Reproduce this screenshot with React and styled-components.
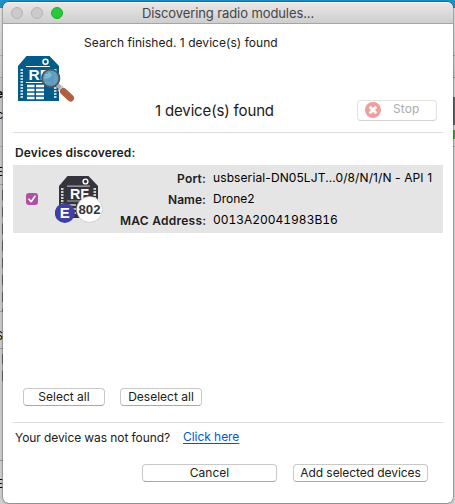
import React from 'react';
import styled, { createGlobalStyle } from 'styled-components';

const GlobalStyle = createGlobalStyle`
  * { box-sizing: border-box; }
  body {
    margin: 0;
    overflow: hidden;
    background: #d9d9d9;
    font-family: Inter, "Liberation Sans", sans-serif;
    font-size: 12px;
    color: #202020;
  }
`;

const Desktop = styled.div`
  position: relative;
  display: flex;
  justify-content: space-between;
  width: 455px;
  height: 504px;
  overflow: hidden;
  background: linear-gradient(#238fc3 0 8px, #e6e6e6 8px, #cfcfcf 76px, #d9d9d9 77px);
`;

const LeftEdge = styled.div`
  display: flex;
  flex-direction: column;
  width: 10px;
  padding-top: 55px;
  background: linear-gradient(transparent 77px, #b0b0b0 77px 78px, #c9c9c9 78px, #d4d4d4 100%);
`;

const RightEdge = styled.div`
  display: flex;
  flex-direction: column;
  align-items: flex-end;
  width: 5px;
  padding-top: 55px;
`;

const Sliver = styled.div`
  flex: none;
  width: 3px;
  height: ${(p) => p.$height}px;
  background: ${(p) => p.$fill || 'transparent'};
`;

const DashedEdge = styled.div`
  flex: none;
  width: 1px;
  height: ${(p) => p.$height}px;
  margin-left: 2px;
  background: repeating-linear-gradient(transparent 0 4px, #777 6px 14px, transparent 16px 17px);
`;

const HiddenLabel = styled.div`
  flex: none;
  width: 3px;
  height: ${(p) => p.$height}px;
  overflow: hidden;
  display: flex;
  justify-content: flex-end;
  line-height: 14px;
  font-weight: ${(p) => (p.$bold ? 700 : 400)};
  color: #000;
`;

const Window = styled.main`
  position: absolute;
  top: 2px;
  left: 3px;
  width: 450px;
  height: 501px;
  display: flex;
  flex-direction: column;
  overflow: hidden;
  border-radius: 6px;
  background: #fff;
  box-shadow: 0 0 0 0.5px rgba(0, 0, 0, 0.35), 0 1px 4px rgba(0, 0, 0, 0.3);
`;

const TitleBar = styled.header`
  display: grid;
  grid-template-columns: 86px 1fr 86px;
  align-items: center;
  flex: none;
  height: 22px;
  border-top: 1px solid #f2f2f2;
  border-bottom: 1px solid #a5a5a5;
  background: linear-gradient(#e7e7e7, #cecece);
`;

const Lights = styled.div`
  display: flex;
  gap: 8px;
  padding-left: 8px;
`;

const Light = styled.span`
  width: 12px;
  height: 12px;
  border-radius: 50%;
  border: 1px solid ${(p) => (p.$on ? '#1eae2b' : '#b3b3b3')};
  background: ${(p) => (p.$on ? '#27c83a' : '#cbcbcb')};
`;

const Title = styled.h1`
  margin: 0;
  text-align: center;
  font-size: 13px;
  font-weight: 400;
  line-height: 20px;
  letter-spacing: -0.1px;
  white-space: nowrap;
  color: #454545;
`;

const Body = styled.div`
  display: flex;
  flex-direction: column;
  flex: 1;
  padding: 0 10px;
`;

const Summary = styled.section`
  display: grid;
  grid-template-columns: 71px 1fr;
  height: 109px;
  border-bottom: 1px solid #dcdcdc;
`;

const SummaryIcon = styled.div`
  padding: 31px 0 0 3px;
`;

const Status = styled.p`
  margin: 10px 0 0;
  line-height: 18px;
  letter-spacing: 0.04px;
`;

const CountRow = styled.div`
  display: flex;
  align-items: center;
  justify-content: space-between;
  margin-top: 47px;
  padding: 0 6px 0 71px;
`;

const Count = styled.strong`
  font-size: 15px;
  font-weight: 400;
  line-height: 20px;
  letter-spacing: -0.15px;
  padding-top: 2px;
`;

const Button = styled.button`
  display: flex;
  align-items: center;
  justify-content: center;
  width: ${(p) => p.$width}px;
  height: 18px;
  padding: 0;
  border: 1px solid #c9c9c9;
  border-bottom-color: #a8a8a8;
  border-radius: 4px;
  background: #fff;
  font: inherit;
  line-height: 16px;
  letter-spacing: ${(p) => p.$tracking || 0}px;
  white-space: nowrap;
  color: #202020;
`;

const StopButton = styled(Button)`
  justify-content: flex-start;
  height: 21px;
  padding-left: 7px;
  gap: 12px;
  border-color: #e2e2e2;
  border-bottom-color: #d2d2d2;
  line-height: 17px;
  color: #adadad;

  span { padding-bottom: 3px; }
`;

const Devices = styled.section`
  display: flex;
  flex-direction: column;
  height: 290px;
  border-bottom: 1px solid #dcdcdc;
`;

const SectionTitle = styled.h2`
  margin: 11px 0 3px 2px;
  font-size: 12px;
  font-weight: 600;
  line-height: 18px;
  letter-spacing: 0.15px;
`;

const DeviceRow = styled.article`
  display: grid;
  grid-template-columns: 42px 65px 1fr;
  height: 68px;
  background: #e5e5e5;
`;

const Checkbox = styled.span`
  display: flex;
  width: 12px;
  height: 12px;
  margin: 28px 0 0 13px;
  border-radius: 3px;
  background: #b04fa6;
`;

const DeviceIcon = styled.div`
  padding-top: 10px;
`;

const Facts = styled.dl`
  display: grid;
  grid-template-columns: 86px 1fr;
  grid-auto-rows: 21px;
  column-gap: 7px;
  margin: 3px 0 0;
`;

const FactName = styled.dt`
  font-weight: 600;
  line-height: 21px;
  text-align: right;
  letter-spacing: ${(p) => p.$tracking}px;
  white-space: nowrap;
`;

const FactValue = styled.dd`
  margin: 0;
  line-height: 19px;
  font-variant-numeric: ${(p) => (p.$tabular ? 'tabular-nums' : 'normal')};
  letter-spacing: ${(p) => p.$tracking}px;
  white-space: nowrap;
  color: #000;
`;

const SelectionActions = styled.div`
  display: flex;
  gap: 15px;
  margin: auto 0 16px 10px;
`;

const Help = styled.p`
  display: flex;
  gap: 13px;
  margin: 5px 0 0 2px;
  line-height: 20px;
  letter-spacing: -0.085px;
`;

const HelpLink = styled.a`
  line-height: 18px;
  letter-spacing: -0.05px;
  color: #0058d0;
  text-decoration: underline;
  text-underline-offset: 2px;
`;

const Actions = styled.footer`
  display: flex;
  justify-content: flex-end;
  gap: 16px;
  margin: 16px 15px 0 0;
`;

function RadioSearchIcon() {
  const pins = [15, 18, 21, 24, 27, 30, 33, 36, 39, 42];
  return (
    <svg width="60" height="48" viewBox="0 0 60 48" display="block">
      <path d="M10.5 1h23L43 11v35H2V11z" fill="#035c87" />
      <path d="M10 11.500h24M10 27.500h25" stroke="#fff" strokeWidth="1" />
      <circle cx="29.500" cy="6.700" r="2.500" fill="none" stroke="#fff" strokeWidth="1.500" />
      {pins.map((y) => (
        <path key={y} d={`M4.500 ${y}h2.500M38 ${y}h2.500`} stroke="#fff" strokeWidth="1.600" />
      ))}
      {[31, 35, 39, 43].map((y) => (
        <path key={y} d={`M11 ${y}h7.500M20 ${y}h8`} stroke="#fff" strokeWidth="2.300" />
      ))}
      <text x="12.500" y="24.600" fontSize="15.500" fontWeight="700" fontFamily="Liberation Sans, sans-serif" fill="#fff">RF</text>
      <path d="M40.500 29l5 5" stroke="#a9adb0" strokeWidth="4" />
      <path d="M47.500 36.500l7 6.500" stroke="#ae6040" strokeWidth="7" strokeLinecap="round" />
      <path d="M42 36l5-5" stroke="#c8c8c8" strokeWidth="1.500" />
      <circle cx="34.700" cy="23.300" r="8.700" fill="#60a1c3" fillOpacity=".94" stroke="#54575b" strokeWidth="1.900" />
      <path d="M29 20h3l2-2.500M28.500 23q6-1 7-4" fill="none" stroke="#8bbbd3" strokeWidth="1.800" />
    </svg>
  );
}

function RadioModuleIcon() {
  return (
    <svg width="50" height="50" viewBox="0 0 50 50" display="block">
      <path d="M12.500 1h21L43 11v32H4V11z" fill="#35343d" />
      <path d="M12 11.200h23M12 26h24" stroke="#aaa9af" strokeWidth="1.200" />
      <circle cx="30.500" cy="6.500" r="2.400" fill="#35343d" stroke="#fff" strokeWidth="1.400" />
      {[14, 17, 20, 23, 26, 29].map((y) => (
        <path key={y} d={`M6 ${y}h2.500M38.500 ${y}h2.500`} stroke="#fff" strokeWidth="1.500" />
      ))}
      <path d="M13 30h8M13 34h8M13 38h8" stroke="#d5d5d8" strokeWidth="1.600" />
      <text x="15" y="23.500" fontSize="15" fontWeight="700" textLength="19" lengthAdjust="spacingAndGlyphs" fontFamily="Liberation Sans, sans-serif" fill="#fff">RF</text>
      <circle cx="9.800" cy="38" r="10" fill="#403fa3" />
      <text x="9.800" y="43.200" textAnchor="middle" fontSize="15" fontWeight="700" fontFamily="Liberation Sans, sans-serif" fill="#fff">E</text>
      <circle cx="34.500" cy="34.500" r="12.900" fill="#fff" stroke="#b9b9b9" strokeWidth=".6" />
      <text x="23.500" y="38.800" textLength="22" lengthAdjust="spacingAndGlyphs" fontSize="13" fontWeight="700" fontFamily="Liberation Sans, sans-serif" fill="#35343d">802</text>
    </svg>
  );
}

function StopIcon() {
  return (
    <svg width="16" height="16" viewBox="0 0 16 16">
      <circle cx="8" cy="8" r="8" fill="#ef9d9d" />
      <path d="M4.700 4.700l6.600 6.600M11.300 4.700l-6.600 6.600" stroke="#fff" strokeWidth="2.700" />
    </svg>
  );
}

function Backdrop() {
  return (
    <>
      <LeftEdge aria-hidden="true">
        <Sliver $height={1} $fill="#b5b5b5" />
        <Sliver $height={31} />
        <HiddenLabel $height={21} $bold>e</HiddenLabel>
        <HiddenLabel $height={38}>c</HiddenLabel>
        <Sliver $height={1} $fill="#b0b0b0" />
        <Sliver $height={18} />
        <HiddenLabel $height={19}>E</HiddenLabel>
        <Sliver $height={1} $fill="#a0a0a0" />
        <DashedEdge $height={126} />
        <Sliver $height={1} $fill="#a0a0a0" />
        <Sliver $height={17} />
        <HiddenLabel $height={19}>S</HiddenLabel>
        <Sliver $height={1} $fill="#a0a0a0" />
        <DashedEdge $height={34} />
        <Sliver $height={77} />
        <Sliver $height={1} $fill="#a0a0a0" />
        <Sliver $height={16} />
        <HiddenLabel $height={20}>E</HiddenLabel>
      </LeftEdge>
      <RightEdge aria-hidden="true">
        <Sliver $height={1} $fill="#aaa" />
        <Sliver $height={21} />
        <Sliver $height={1} $fill="#999" />
        <Sliver $height={19} />
        <Sliver $height={28} $fill="#68686c" />
        <Sliver $height={5} />
        <Sliver $height={9} $fill="#59a63d" />
        <Sliver $height={7} />
        <Sliver $height={1} $fill="#aaa" />
      </RightEdge>
    </>
  );
}

export default function App() {
  return (
    <Desktop>
      <GlobalStyle />
      <Backdrop />
      <Window>
        <TitleBar>
          <Lights>
            <Light />
            <Light />
            <Light $on />
          </Lights>
          <Title>Discovering radio modules...</Title>
        </TitleBar>
        <Body>
          <Summary>
            <SummaryIcon><RadioSearchIcon /></SummaryIcon>
            <div>
              <Status>Search finished. 1 device(s) found</Status>
              <CountRow>
                <Count>1 device(s) found</Count>
                <StopButton $width={80} $tracking={0.1} disabled>
                  <StopIcon />
                  <span>Stop</span>
                </StopButton>
              </CountRow>
            </div>
          </Summary>
          <Devices>
            <SectionTitle>Devices discovered:</SectionTitle>
            <DeviceRow>
              <Checkbox>
                <svg width="12" height="12" viewBox="0 0 12 12">
                  <path d="M3 6.200l2.200 2.500L9 3.200" fill="none" stroke="#fff" strokeWidth="1.600" strokeLinecap="round" strokeLinejoin="round" />
                </svg>
              </Checkbox>
              <DeviceIcon><RadioModuleIcon /></DeviceIcon>
              <Facts>
                <FactName $tracking={0.18}>Port:</FactName>
                <FactValue $tracking={0.1}>usbserial-DN05LJT...0/8/N/1/N - API 1</FactValue>
                <FactName $tracking={0.05}>Name:</FactName>
                <FactValue $tracking={0}>Drone2</FactValue>
                <FactName $tracking={0.25}>MAC Address:</FactName>
                <FactValue $tracking={-0.02} $tabular>0013A20041983B16</FactValue>
              </Facts>
            </DeviceRow>
            <SelectionActions>
              <Button $width={82}>Select all</Button>
              <Button $width={82}>Deselect all</Button>
            </SelectionActions>
          </Devices>
          <Help>
            Your device was not found?
            <HelpLink href="#">Click here</HelpLink>
          </Help>
          <Actions>
            <Button $width={135}>Cancel</Button>
            <Button $width={135} $tracking={-0.08}>Add selected devices</Button>
          </Actions>
        </Body>
      </Window>
    </Desktop>
  );
}
